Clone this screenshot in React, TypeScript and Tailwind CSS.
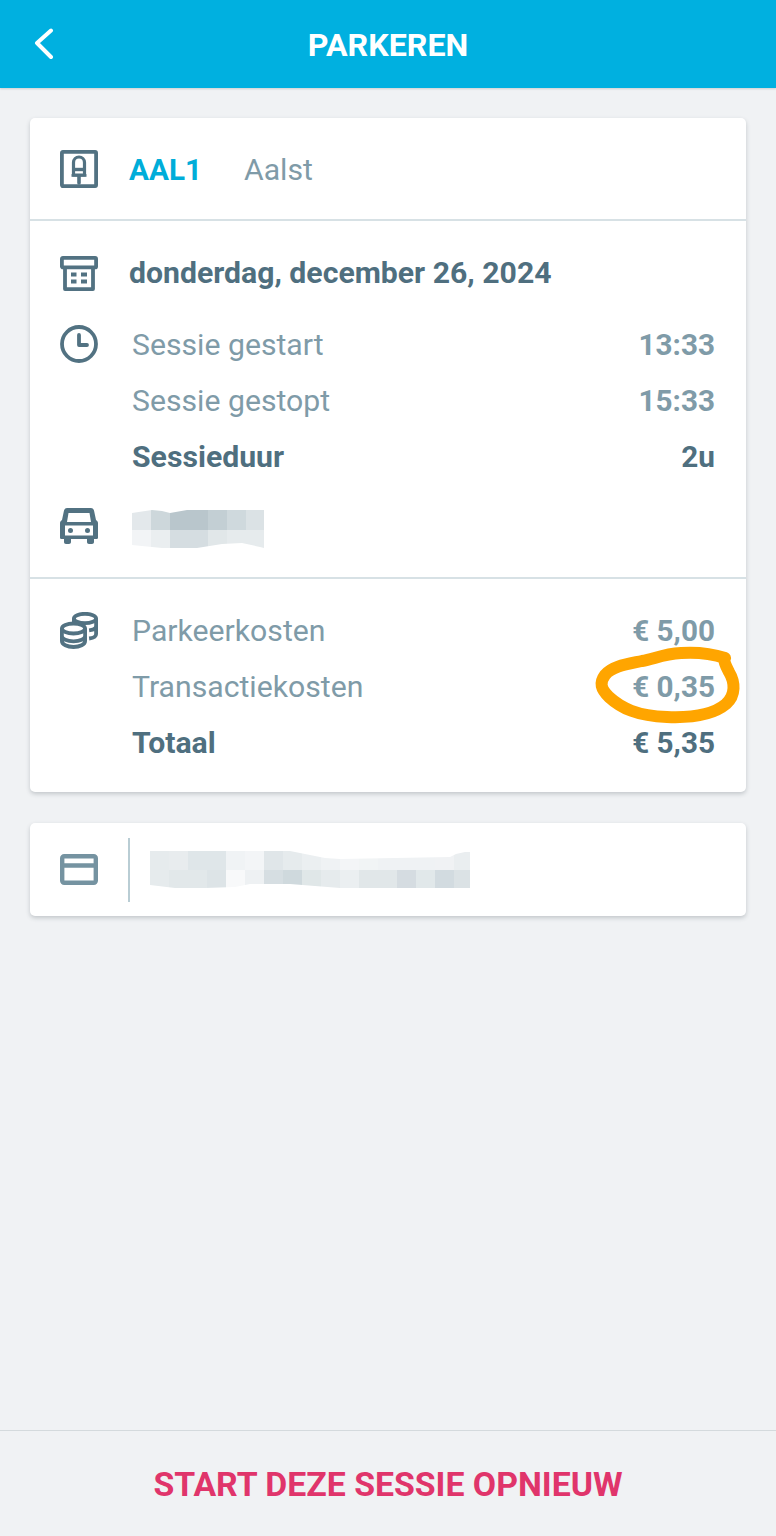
const plateTop = ["#e3e8eb", "#cdd7db", "#b9c6cc", "#b9c6cc", "#c3cfd4", "#cfd9dd", "#dbe2e5"];
const plateBottom = ["#f2f4f6", "#eaeef0", "#d5dde1", "#d5dde1", "#e1e7e9", "#e6ebed", "#e6ebed"];
const cardTop = ["#e6ebed", "#e8ecee", "#dfe6e9", "#dfe6e9", "#f0f3f5", "#f3f5f7", "#e0e6e9", "#e6ebed", "#ebeff1", "#eff2f4", "#f3f5f7", "#f1f4f5", "#eff2f4", "#eff2f4", "#eff2f4", "#f0f2f4", "#eaeef0"];
const cardBottom = ["#e6ebed", "#e2e8ea", "#e2e8ea", "#dde4e7", "#f8f9fa", "#eef1f3", "#d6dee2", "#cfd9dd", "#e0e7e8", "#e6ebed", "#ebeff1", "#e1e7e9", "#e1e7e9", "#d5dce1", "#e1e8ea", "#d2dbe0", "#dbe2e5"];

function Pixels({ top, bottom, cell, className }: { top: string[]; bottom: string[]; cell: string; className: string }) {
  return (
    <div className={className}>
      <div className="flex h-1/2">
        {top.map((c, i) => <div key={i} className={cell} style={{ backgroundColor: c }} />)}
      </div>
      <div className="flex h-1/2">
        {bottom.map((c, i) => <div key={i} className={cell} style={{ backgroundColor: c }} />)}
      </div>
    </div>
  );
}

function Row({ label, value, bold }: { label: string; value: string; bold?: boolean }) {
  return (
    <div className="flex h-[56px] items-center justify-between pt-[2px]">
      <span className={bold ? "font-bold text-[#4f6f7f]" : "text-[#7f9ba8]"}>{label}</span>
      <span className={`text-[29.700px] font-bold ${bold ? "text-[#4f6f7f]" : "text-[#7f9ba8]"}`}>{value}</span>
    </div>
  );
}

function ParkingIcon() {
  return (
    <svg width="38" height="38" viewBox="0 0 38 38" className="shrink-0" fill="none" stroke="#527282" strokeWidth="3.800" strokeLinejoin="round">
      <rect x="1.900" y="1.900" width="34.200" height="34.200" rx="1" />
      <path d="M13.500 12.500a5.500 5.500 0 0 1 11 0V25h-11Z" strokeWidth="3.200" />
      <path d="M13 19.500h12" strokeWidth="3.400" />
      <path d="M11.500 25.500h15" strokeWidth="2.600" />
      <path d="M19 26v7" strokeWidth="3.600" strokeLinecap="round" />
    </svg>
  );
}

function CalendarIcon() {
  return (
    <svg width="38" height="35" viewBox="0 0 38 35" className="shrink-0" fill="none" stroke="#527282" strokeWidth="3.800" strokeLinejoin="round">
      <rect x="1.900" y="1.900" width="34.200" height="9.500" rx="1" />
      <path d="M5 11.500v21.600h28V11.500" />
      <path d="M11 18.500h5.500M21 18.500h6M11 25.500h5.500M21 25.500h6" strokeWidth="3.800" />
    </svg>
  );
}

function ClockIcon() {
  return (
    <svg width="38" height="38" viewBox="0 0 38 38" className="shrink-0" fill="none" stroke="#527282" strokeWidth="3.800" strokeLinecap="round">
      <circle cx="19" cy="19" r="17" />
      <path d="M19 10V20H27" strokeLinejoin="round" />
    </svg>
  );
}

function CarIcon() {
  return (
    <svg width="38" height="36" viewBox="0 0 38 36" className="shrink-0">
      <path
        fill="#527282"
        fillRule="evenodd"
        d="M7 0h24c1.500 0 2.500 1 3 2.500L36 12l1.200 1c.5.500.8 1.200.8 2V29.500c0 1-.8 1.500-1.500 1.500H34v3c0 1-.8 2-2 2h-3c-1.200 0-2-1-2-2v-3H11v3c0 1-.8 2-2 2H6c-1.200 0-2-1-2-2v-3H1.500C.8 31 0 30.500 0 29.500V15c0-.8.300-1.500.8-2L2 12 4 2.500C4.500 1 5.500 0 7 0Zm1.500 5L7 14h24L29.500 5ZM5 17.500V27.500H33V17.500ZM10.500 20a2.500 2.500 0 1 1 0 5 2.500 2.500 0 0 1 0-5Zm17 0a2.500 2.500 0 1 1 0 5 2.500 2.500 0 0 1 0-5Z"
      />
    </svg>
  );
}

function CoinsIcon() {
  return (
    <svg width="38" height="37" viewBox="0 0 38 37" className="shrink-0" fill="none" stroke="#527282" strokeWidth="3.800">
      <ellipse cx="25" cy="6.500" rx="11.100" ry="4.700" />
      <path d="M13.900 6.500v6M36.100 6.500v15.500c0 2.200-3 4-7 4.500M36.100 14c0 2.200-3 3.900-7 4.400" />
      <ellipse cx="13.500" cy="16.500" rx="11.600" ry="5" />
      <path d="M1.900 16.500v12.500c0 3.500 5.200 6 11.600 6s11.600-2.500 11.600-6V16.500M1.900 24c0 3 5.200 5.300 11.600 5.300S25.100 27 25.100 24" />
    </svg>
  );
}

function CardIcon() {
  return (
    <svg width="38" height="31" viewBox="0 0 38 31" className="shrink-0" fill="none" stroke="#7593a1" strokeWidth="4.400">
      <rect x="2.200" y="2.200" width="33.600" height="26.600" rx="2" />
      <path d="M2.200 11.500h33.600" strokeWidth="4.600" />
    </svg>
  );
}

export default function App() {
  return (
    <div className="relative flex h-[1536px] w-[776px] flex-col overflow-hidden bg-[#f0f2f4] font-['Roboto',sans-serif] text-[30.200px] leading-none">
      <header className="relative flex h-[88px] shrink-0 items-center justify-center bg-[#00b0e0] shadow-[0_1px_2px_rgba(0,0,0,0.15)]">
        <svg width="20" height="32" viewBox="0 0 20 32" className="absolute left-[34px] top-[28px]" fill="none" stroke="#fff" strokeWidth="4" strokeLinecap="round" strokeLinejoin="round">
          <path d="M17 2.500 3 15l14 14" />
        </svg>
        <h1 className="pt-[3px] text-[32.200px] font-bold text-white">PARKEREN</h1>
      </header>

      <main className="flex flex-1 flex-col gap-[31px] px-[30px] pt-[30px]">
        <section className="h-[674px] rounded-[5px] bg-white shadow-[0_2px_4px_rgba(60,70,80,0.25)]">
          <div className="flex h-[103px] items-center border-b-2 border-[#d7e1e5] pl-[30px]">
            <ParkingIcon />
            <div className="flex items-center pt-[3px]">
              <span className="ml-[31px] text-[29.700px] font-bold text-[#00add9]">AAL1</span>
              <span className="ml-[42px] text-[#7f9ba8]">Aalst</span>
            </div>
          </div>

          <div className="h-[358px] border-b-2 border-[#d7e1e5] pl-[30px] pr-[31px] pt-[18px]">
            <div className="flex h-[68px] items-center">
              <CalendarIcon />
              <span className="ml-[31px] pt-[1px] font-bold text-[#4f6f7f]">donderdag, december 26, 2024</span>
            </div>
            <div className="mt-[9px] flex gap-[34px]">
              <div className="pt-[9px]"><ClockIcon /></div>
              <div className="flex-1">
                <Row label="Sessie gestart" value="13:33" />
                <Row label="Sessie gestopt" value="15:33" />
                <Row label="Sessieduur" value="2u" bold />
              </div>
            </div>
            <div className="mt-[24px] flex items-start gap-[34px]">
              <CarIcon />
              <Pixels
                top={plateTop}
                bottom={plateBottom}
                cell="h-full w-[19px] shrink-0"
                className="mt-[2px] h-[39px] w-[132px] overflow-hidden [clip-path:polygon(0_3px,20px_0,30px_1px,38px_3px,55px_0,132px_0,132px_38px,128px_37px,110px_33px,90px_34px,65px_38px,30px_38px,0_35px)]"
              />
            </div>
          </div>

          <div className="flex gap-[34px] pl-[30px] pr-[31px] pt-[33px]">
            <CoinsIcon />
            <div className="-mt-[10px] flex-1">
              <Row label="Parkeerkosten" value="€ 5,00" />
              <Row label="Transactiekosten" value="€ 0,35" />
              <Row label="Totaal" value="€ 5,35" bold />
            </div>
          </div>
        </section>

        <section className="flex h-[93px] items-center rounded-[5px] bg-white pl-[30px] shadow-[0_2px_4px_rgba(60,70,80,0.25)]">
          <CardIcon />
          <div className="ml-[30px] h-[64px] w-[2px] bg-[#b9cdd4]" />
          <Pixels
            top={cardTop}
            bottom={cardBottom}
            cell="h-full w-[19px] shrink-0"
            className="ml-[20px] h-[37px] w-[320px] overflow-hidden [clip-path:polygon(0_0,140px_0,150px_2px,175px_7px,190px_8px,300px_6px,306px_3px,315px_1px,320px_1px,320px_37px,190px_37px,140px_33px,100px_33px,85px_36px,55px_37px,25px_37px,0_34px)]"
          />
        </section>
      </main>

      <footer className="flex h-[106px] shrink-0 items-center justify-center border-t border-[#d4dadd] pt-[3px]">
        <span className="text-[33.800px] font-bold text-[#e0356b]">START DEZE SESSIE OPNIEUW</span>
      </footer>

      <svg width="776" height="1536" viewBox="0 0 776 1536" className="pointer-events-none absolute left-0 top-0" fill="none" stroke="#ffa500" strokeWidth="12" strokeLinecap="round" strokeLinejoin="round">
        <path d="M725 658c-12-4-28-6-44-5-18 1-27 6-39 8-14 3-30 5-37 14-6 8-4 14 4 22 12 11 28 19 58 20 24 1 46-2 59-13 10-9 9-22 3-32-2-4-5-9-5-14" />
      </svg>
    </div>
  );
}
